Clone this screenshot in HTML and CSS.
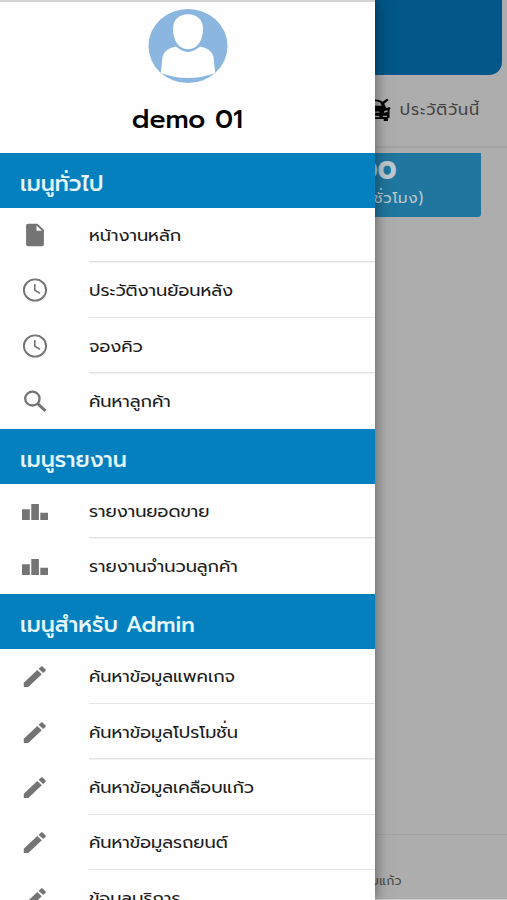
FILE: index.html
```html
<!DOCTYPE html>
<html lang="th">
<head>
<meta charset="utf-8">
<title>เมนู</title>
<link rel="stylesheet" href="styles.css">
</head>
<body>
<svg class="symbols" aria-hidden="true">
  <symbol id="file" viewBox="0 0 26 26"><path d="M5.800 1.700h9.300l6.500 6.100v14.300c0 1.500-.7 2.200-2.100 2.200H5.800c-1.400 0-2-.7-2-2.200V3.800c0-1.400.6-2.100 2-2.100zm8.400 1.800v5.200h5.500z" fill-rule="evenodd" transform="translate(.3 0)"/></symbol>
  <symbol id="clock" viewBox="0 0 26 26"><ellipse cx="13" cy="13" rx="11.100" ry="10.600" fill="none" stroke="currentColor" stroke-width="1.900"/><path d="M12.800 7v6.300l5.300 3.100" fill="none" stroke="currentColor" stroke-width="1.600"/></symbol>
  <symbol id="search" viewBox="0 0 26 26"><ellipse cx="10.400" cy="10.600" rx="7.200" ry="6.900" fill="none" stroke="currentColor" stroke-width="2.300"/><path d="M15.500 15.500l8 7.400" fill="none" stroke="currentColor" stroke-width="3"/></symbol>
  <symbol id="chart" viewBox="0 0 26 26"><path d="M0 11.200h7.800V22H0zM9.300 6h7.600v16H9.300zM18.300 14.700h7.700V22h-7.700z"/></symbol>
  <symbol id="pencil" viewBox="0 0 26 26"><path d="M1.800 19.800L15.300 7l4.500 4.300L6.300 24H1.800zM16.600 5.800l2.300-2.100c.6-.6 1.300-.6 1.900 0l2.600 2.500c.6.6.6 1.200 0 1.800l-2.300 2.100z"/></symbol>
</svg>
<main class="page">
  <div class="hero"></div>
  <div class="history">
    <svg class="car" viewBox="0 0 30 26"><path d="M3 5Q14 0 21 5l4.500-3.500 1.500 1.500-4.500 4 2 4.500 3.500-1 1 1.500-1 1.500v8l-1.500.5v3h-4.500v-2H8v2H3v-4l-2-1v-8l4-3z"/><path d="M7 5Q14 3 18.500 6l1.500 3H7zM9 15h8.500v1.500H9zM22.500 14.500l3.500-.8v2L22.500 16.500zM9 19.500h8.500v1.500H9zM21 19.500h4.500v1.200H21z" fill="#a6a6a6"/></svg>
    <span>ประวัติวันนี้</span>
  </div>
  <div class="queue"><b>00</b><span>(ชั่วโมง)</span></div>
  <div class="tabs"><span>เคลือบแก้ว</span></div>
</main>
<aside class="drawer">
  <header class="profile">
    <svg class="avatar" viewBox="0 0 80 76"><ellipse cx="40" cy="38" rx="39.500" ry="37" fill="#8ab6e0"/><path d="M28 38.600Q16 41 14.500 49L12.800 65Q26 70 40 70T67.200 65L65.500 49Q64 41 52 38.600Q46 44 40 44T28 38.600Z" fill="#fff"/><path d="M40 6.300c9 0 15 5.700 15 14.500C55 33 49 41.300 40 41.300S25 33 25 20.800C25 12 31 6.300 40 6.300Z" fill="#fff"/></svg>
    <h1>demo 01</h1>
  </header>
  <nav>
    <h2><span>เมนูทั่วไป</span></h2>
    <ul>
      <li><svg><use href="#file"/></svg><a>หน้างานหลัก</a></li>
      <li><svg><use href="#clock"/></svg><a>ประวัติงานย้อนหลัง</a></li>
      <li><svg><use href="#clock"/></svg><a>จองคิว</a></li>
      <li><svg><use href="#search"/></svg><a>ค้นหาลูกค้า</a></li>
    </ul>
    <h2><span>เมนูรายงาน</span></h2>
    <ul>
      <li><svg><use href="#chart"/></svg><a>รายงานยอดขาย</a></li>
      <li><svg><use href="#chart"/></svg><a>รายงานจำนวนลูกค้า</a></li>
    </ul>
    <h2><span>เมนูสำหรับ Admin</span></h2>
    <ul>
      <li><svg><use href="#pencil"/></svg><a>ค้นหาข้อมูลแพคเกจ</a></li>
      <li><svg><use href="#pencil"/></svg><a>ค้นหาข้อมูลโปรโมชั่น</a></li>
      <li><svg><use href="#pencil"/></svg><a>ค้นหาข้อมูลเคลือบแก้ว</a></li>
      <li><svg><use href="#pencil"/></svg><a>ค้นหาข้อมูลรถยนต์</a></li>
      <li><svg><use href="#pencil"/></svg><a>ข้อมูลบริการ</a></li>
    </ul>
  </nav>
</aside>
</body>
</html>
```
FILE: styles.css
```css
* { box-sizing: border-box; }
body {
  margin: 0;
  height: 900px;
  overflow: hidden;
  position: relative;
  background: #adadad;
  font-family: Prompt, "Noto Sans Thai", "Noto Sans", sans-serif;
}
.symbols { display: none; }

.page {
  height: 900px;
  display: flex;
  flex-direction: column;
}
.hero {
  height: 75px;
  margin-right: 5px;
  background: #005788;
  border-radius: 0 0 13px 13px;
}
.history {
  height: 73px;
  padding: 0 27px 2px 0;
  display: flex;
  align-items: center;
  justify-content: flex-end;
  gap: 8px;
  border-bottom: 2px solid #a1a1a1;
  color: #444;
  font-size: 16px;
  letter-spacing: .9px;
}
.car { width: 30px; height: 25px; }
.queue {
  height: 64px;
  margin: 5px 26px 0 0;
  padding: 1px 0 0 359px;
  background: #1f769e;
  border-radius: 0 0 3px 3px;
  color: #bdc7cc;
}
.queue b {
  display: block;
  height: 32px;
  font-size: 27px;
  line-height: 32px;
}
.queue span {
  display: block;
  margin-left: 9px;
  font-size: 15px;
  line-height: 25px;
  letter-spacing: .7px;
}
.tabs {
  margin-top: auto;
  height: 66px;
  padding: 37px 105px 0 0;
  border-top: 1px solid #a2a2a2;
  border-bottom: 1px solid #ccc;
  text-align: right;
  color: #4c4c4c;
  font-size: 12px;
  letter-spacing: .5px;
}

.drawer {
  position: absolute;
  inset: 0 auto 0 0;
  width: 375px;
  overflow: hidden;
  background: #fefefe;
  border-top: 2px solid #d3d3d3;
  box-shadow: 0 0 14px rgba(0, 0, 0, .5);
}
.profile {
  height: 151px;
  padding-top: 6px;
  display: flex;
  flex-direction: column;
  align-items: center;
}
.avatar { width: 80px; height: 76px; }
.profile h1 {
  margin: 17px 0 0;
  color: #000;
  font-size: 25px;
  font-weight: 500;
  line-height: 38px;
  transform: scaleX(1.06);
}
h2 {
  height: 54.5px;
  margin: 0;
  padding: 7px 0 0 20px;
  display: flex;
  align-items: center;
  background: #0480bf;
  color: #e6f8ff;
  font-size: 21px;
  font-weight: 500;
}
h2 span { transform: scaleX(1.05); transform-origin: left; }
ul { margin: 0; padding: 0; list-style: none; }
li {
  height: 55.4px;
  display: grid;
  grid-template-columns: 26px 1fr;
  column-gap: 41px;
  align-items: center;
  padding: 0 0 .5px 22px;
  background: linear-gradient(#e5e5e5, #e5e5e5) 89px 100% / 100% 1.5px no-repeat;
}
li:last-child { background: none; }
li svg { width: 26px; height: 26px; color: #747474; fill: #747474; }
li a {
  color: #1c1c1c;
  font-size: 17px;
  white-space: nowrap;
  transform: scaleX(1.045);
  transform-origin: left;
}
```
